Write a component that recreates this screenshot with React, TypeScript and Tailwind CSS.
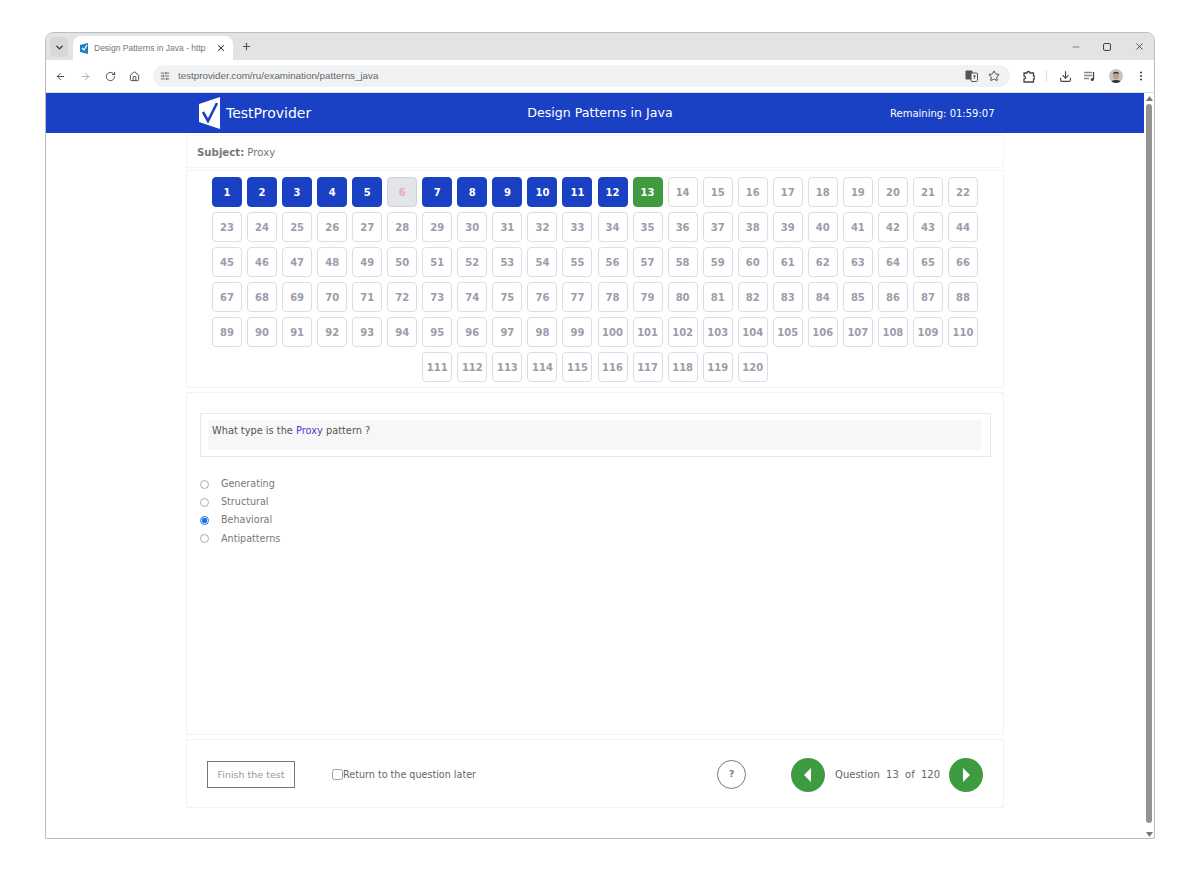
import { ArrowLeft, ArrowRight, RotateCw, House, ChevronDown, X, Plus, Minus, Star, Download, EllipsisVertical, SlidersHorizontal } from 'lucide-react';

const answered = [1, 2, 3, 4, 5, 7, 8, 9, 10, 11, 12];
const numbers = Array.from({ length: 120 }, (_, i) => i + 1);
const options = ['Generating', 'Structural', 'Behavioral', 'Antipatterns'];

const NumberButton = ({ n }: { n: number }) => {
  let cls = 'bg-white border-[#dcdee3] text-[#9a9dab]';
  if (answered.includes(n)) cls = 'bg-[#1a41c4] border-[#1a41c4] text-white';
  if (n === 6) cls = 'bg-[#e2e4e8] border-[#cfd2d6] text-[#e9a9b8]';
  if (n === 13) cls = 'bg-[#3f9b3f] border-[#3f9b3f] text-white';
  return (
    <div className={`w-[30px] h-[30px] rounded-[4px] border flex items-center justify-center text-[10px] font-bold ${cls}`}>
      {n}
    </div>
  );
};

export default function App() {
  return (
    <div className="h-[872px] bg-white pt-[32px] pl-[45px] overflow-hidden font-['DejaVu_Sans',sans-serif]">
      <div className="w-[1110px] h-[807px] border border-[#bdbdbd] rounded-t-[8px] flex flex-col overflow-hidden bg-white">
        {/* tab strip */}
        <div className="h-[27px] bg-[#e3e3e3] flex items-end shrink-0 pl-[4px]">
          <div className="w-[18px] h-[20px] mb-[3px] rounded-[5px] bg-[#d8d8d8] flex items-center justify-center">
            <ChevronDown size={11} strokeWidth={3} className="text-[#333]" />
          </div>
          <div className="w-[160px] h-[24px] ml-[5px] bg-white rounded-t-[8px] flex items-center pl-[7px] pr-[7px]">
            <svg width="8" height="11" viewBox="0 0 8 11" className="shrink-0">
              <path d="M0 2 L8 0 V11 L0 9 Z" fill="#1a7fc4" />
              <path d="M2 5 L4 7 L7 2" stroke="#fff" strokeWidth="1.2" fill="none" />
            </svg>
            <span className="ml-[6px] whitespace-nowrap text-[8.5px] text-[#777] font-['Liberation_Sans',sans-serif]">Design Patterns in Java - http</span>
            <X size={10} strokeWidth={2.5} className="ml-auto text-[#333]" />
          </div>
          <Plus size={11} strokeWidth={2.5} className="ml-[8px] mb-[8px] text-[#555]" />
          <div className="ml-auto flex items-center mb-[8px] text-[#444]">
            <Minus size={10} strokeWidth={1.5} />
            <div className="ml-[22px] w-[8px] h-[8px] border border-[#444] rounded-[2px]" />
            <X size={11} strokeWidth={2} className="ml-[23px] mr-[9px]" />
          </div>
        </div>

        {/* toolbar */}
        <div className="h-[32px] bg-white flex items-center shrink-0 pl-[9px] text-[#444]">
          <ArrowLeft size={11} strokeWidth={2} />
          <ArrowRight size={11} strokeWidth={2} className="ml-[14px] text-[#aaa]" />
          <RotateCw size={11} strokeWidth={2} className="ml-[14px]" />
          <House size={11} strokeWidth={2} className="ml-[13px]" />
          <div className="ml-[13px] w-[857px] h-[22px] rounded-full bg-[#f0f2f4] flex items-center pl-[7px] pr-[10px]">
            <SlidersHorizontal size={10} strokeWidth={2} className="text-[#555]" />
            <span className="ml-[8px] text-[9.8px] text-[#666] font-['Liberation_Sans',sans-serif]">testprovider.com/ru/examination/patterns_java</span>
            <svg width="13" height="12" viewBox="0 0 13 12" className="ml-auto">
              <rect x="0.5" y="0.5" width="7" height="9" fill="#555" rx="1" />
              <rect x="6" y="3" width="6.5" height="8.5" fill="#f0f2f4" stroke="#555" strokeWidth="1" rx="1" />
              <path d="M8 6 H11 M9.5 5 V9" stroke="#555" strokeWidth="0.8" />
            </svg>
            <Star size={12} strokeWidth={2} className="ml-[10px]" />
          </div>
          <svg width="12" height="13" viewBox="0 0 12 13" className="ml-[13px]">
            <path d="M1 3 H4 A1.5 1.5 0 0 1 7 3 H10.5 V6 A1.5 1.5 0 0 1 10.5 9 V12 H1 V9 A1.5 1.5 0 0 0 1 6 Z" fill="none" stroke="#444" strokeWidth="1.3" />
          </svg>
          <div className="ml-[11px] w-px h-[12px] bg-[#ddd]" />
          <Download size={13} strokeWidth={2} className="ml-[12px]" />
          <svg width="12" height="12" viewBox="0 0 12 12" className="ml-[12px]">
            <path d="M0 2.5 H8 M0 5.5 H8 M0 8.5 H5" stroke="#888" strokeWidth="1.4" />
            <path d="M9.5 2 V9" stroke="#444" strokeWidth="1.3" />
            <circle cx="8.3" cy="9.5" r="1.6" fill="#444" />
          </svg>
          <svg width="14" height="14" viewBox="0 0 14 14" className="ml-[13px] rounded-full">
            <rect width="14" height="14" fill="#b9c9cf" />
            <path d="M1 14 C2 10 12 10 13 14 Z" fill="#20333d" />
            <ellipse cx="7" cy="6.5" rx="3" ry="3.8" fill="#c99a80" />
            <path d="M4 5 C4 2 10 2 10 5 C8 4 6 4 4 5 Z" fill="#3a2c25" />
          </svg>
          <EllipsisVertical size={12} strokeWidth={2.2} className="ml-[12px]" />
        </div>

        {/* page + scrollbar */}
        <div className="flex-1 flex min-h-0 border-t border-[#cfe0f5]">
          <div className="w-[1098px] flex flex-col">
            <div className="h-[40px] bg-[#1a41c4] text-white flex items-center shrink-0 pl-[153px]">
              <div className="w-[328px] flex items-center">
                <svg width="21" height="32" viewBox="0 0 21 32">
                  <path d="M0 7 L21 0 V32 L0 25 Z" fill="#fff" />
                  <path d="M4 15 L9 24 L18 6" stroke="#1a41c4" strokeWidth="2.6" fill="none" />
                </svg>
                <span className="ml-[6px] text-[14px] font-medium">TestProvider</span>
              </div>
              <span className="w-[146px] text-center text-[12.6px] whitespace-nowrap">Design Patterns in Java</span>
              <span className="ml-[217px] pt-[1px] text-[10px] whitespace-nowrap">Remaining: 01:59:07</span>
            </div>

            <div className="w-[818px] ml-[140px] flex flex-col">
              <div className="h-[33px] mt-[2px] border border-[#f5f5f5] flex items-center pl-[10px] pt-[2px] text-[10.2px] text-[#777]">
                <b className="mr-[3px]">Subject:</b> Proxy
              </div>
              <div className="h-[218px] mt-[2px] border border-[#f3f3f3] pt-[6px] flex justify-center">
                <div className="w-[767px] flex flex-wrap justify-center gap-x-[5.05px] gap-y-[5px] content-start">
                  {numbers.map((n) => (
                    <NumberButton key={n} n={n} />
                  ))}
                </div>
              </div>
              <div className="h-[343px] mt-[4px] border border-[#f3f3f3] pt-[20px] pl-[13px]">
                <div className="w-[791px] h-[44px] border border-[#e9e9e9] pt-[6px] pl-[7px] pr-[9px]">
                  <div className="h-[30px] bg-[#f7f7f7] pl-[4px] pt-[3px] text-[9.8px] leading-[16px] text-[#555]">
                    What type is the <span className="text-[#4a3fd0]">Proxy</span> pattern ?
                  </div>
                </div>
                <div className="mt-[20px] flex flex-col gap-[4.3px]">
                  {options.map((o) => (
                    <label key={o} className="flex items-center h-[14px] text-[9.6px] text-[#777]">
                      <input
                        type="radio"
                        name="answer"
                        defaultChecked={o === 'Behavioral'}
                        className={o === 'Behavioral' ? 'w-[9px] h-[9px] m-0 accent-[#1a73e8]' : 'w-[9px] h-[9px] m-0 opacity-60'}
                      />
                      <span className="ml-[12px]">{o}</span>
                    </label>
                  ))}
                </div>
              </div>
              <div className="h-[69px] mt-[4px] border border-[#f3f3f3] flex items-center pl-[20px] pt-[2px]">
                <div className="w-[88px] h-[27px] border-[1.5px] border-[#777] flex items-center justify-center pt-[1px] text-[9.5px] text-[#999]">
                  Finish the test
                </div>
                <input type="checkbox" className="ml-[37px] w-[11px] h-[11px] m-0 opacity-70" />
                <span className="pt-[1px] text-[9.6px] text-[#666]">Return to the question later</span>
                <div className="ml-[241px] w-[29px] h-[29px] rounded-full border-[1.5px] border-[#777] flex items-center justify-center text-[9px] font-bold text-[#777]">
                  ?
                </div>
                <div className="ml-[45px] w-[34px] h-[34px] rounded-full bg-[#3f9b3f] flex items-center justify-center">
                  <svg width="10" height="14" viewBox="0 0 10 14"><path d="M8 0 V14 L1 7 Z" fill="#fff" /></svg>
                </div>
                <span className="ml-[10px] w-[105px] flex justify-between text-[10px] text-[#666]">
                  <span>Question</span>
                  <span>13</span>
                  <span>of</span>
                  <span>120</span>
                </span>
                <div className="ml-[9px] w-[34px] h-[34px] rounded-full bg-[#3f9b3f] flex items-center justify-center">
                  <svg width="10" height="14" viewBox="0 0 10 14"><path d="M2 0 V14 L9 7 Z" fill="#fff" /></svg>
                </div>
              </div>
            </div>
          </div>
          <div className="w-[10px] flex flex-col items-center bg-white">
            <svg width="7" height="5" viewBox="0 0 7 5" className="mt-[3px]"><path d="M3.5 0 L7 5 H0 Z" fill="#777" /></svg>
            <div className="mt-[3px] w-[6px] h-[719px] rounded-full bg-[#929292]" />
            <svg width="7" height="5" viewBox="0 0 7 5" className="mt-auto mb-[1px]"><path d="M3.5 5 L7 0 H0 Z" fill="#777" /></svg>
          </div>
        </div>
      </div>
    </div>
  );
}
